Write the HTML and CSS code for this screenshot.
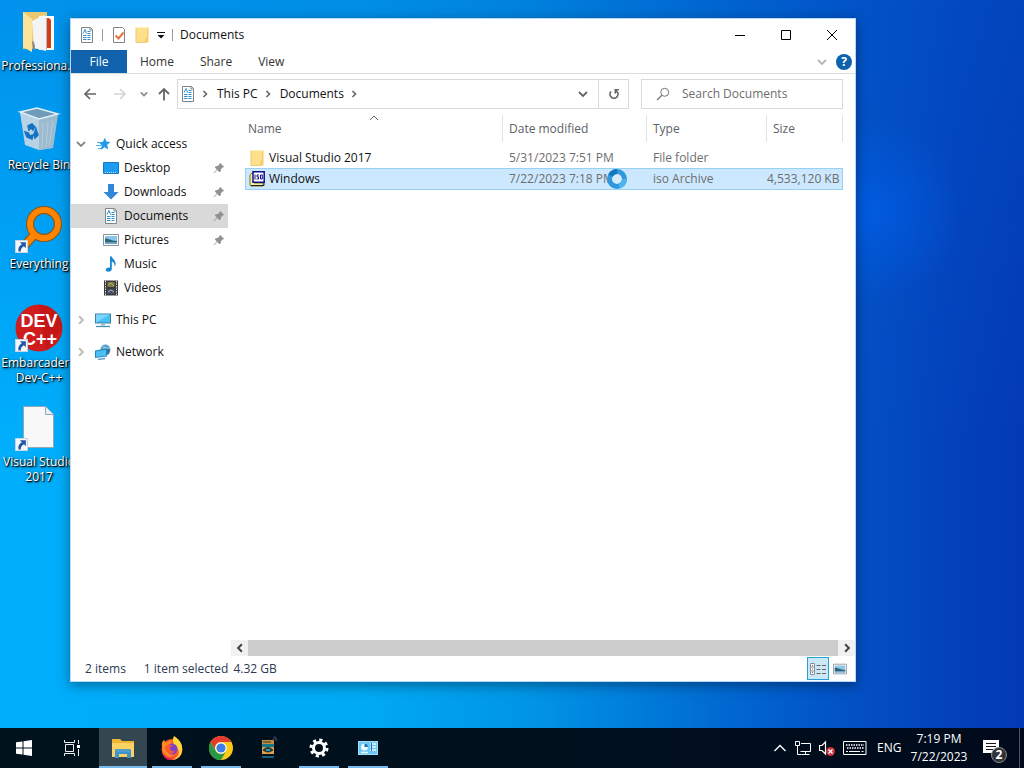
FILE: index.html
```html
<!DOCTYPE html>
<html lang="en">
<head>
<meta charset="utf-8">
<title>Documents</title>
<link rel="stylesheet" href="styles.css">
</head>
<body>
<svg class="sprite" aria-hidden="true">
  <symbol id="doc" viewBox="0 0 16 16">
    <path d="M2.5.5h9l2 2v13h-11z" fill="#fff" stroke="#7d868c"/>
    <path d="M11 .5V3h2.500" fill="none" stroke="#7d868c"/>
    <path d="M4 6.500 6 2.500l1.500 4M8.500 4.500h3M8.500 6.500h3M4 8.500h3.500M8.500 8.500h3M4 10.500h3.500M8.500 10.500h3M4 12.500h3.500M8.500 12.500h3" fill="none" stroke="#2f8fcb"/>
  </symbol>
  <symbol id="folder" viewBox="0 0 16 16">
    <path d="M2 .5h11v13l-1 2H2z" fill="#ffe08a"/>
    <path d="M11.500 11l1.500-1v-9.500h1.500v15H11z" fill="#f3cd66"/>
    <path d="M2 .5v15h10" fill="none" stroke="#edca70"/>
  </symbol>
  <symbol id="pin" viewBox="0 0 12 12">
    <path d="M7 .8 11.200 5l-1.600.5-1.600 1.700-.2 2.300-1.500.5-2.100-2.100L1 11.200l-.4-.5 3.200-3.200L1.900 5.600l.6-1.400 2.300-.2 1.600-1.600z" fill="#8d9296"/>
  </symbol>
  <symbol id="picture" viewBox="0 0 16 16">
    <path d="M.5 2.500h15v11H.5z" fill="#fff" stroke="#8c9499"/>
    <path d="M2 4h12v8H2z" fill="#8cc5ea"/>
    <path d="M2 6.500c3-.5 5 2 12 2.500v1.500H2z" fill="#2e6575"/>
    <path d="M2 10.500h12V12H2z" fill="#6fa3cb"/>
  </symbol>
  <symbol id="chev-r" viewBox="0 0 8 8"><path d="M2.500 1 5.500 4l-3 3" fill="none" stroke="currentColor" stroke-width="1.600"/></symbol>
  <symbol id="chev-d" viewBox="0 0 10 10"><path d="M1 3l4 4 4-4" fill="none" stroke="currentColor" stroke-width="1.800"/></symbol>
  <symbol id="shortcut" viewBox="0 0 12 12">
    <path d="M.5.5h11v11H.5z" fill="#f6f8fb" stroke="#c9d4e0"/>
    <path d="M4.500 2H10v5.500L8.200 5.800C6.200 7 5.400 8.200 5.300 10.500H3.200C2.600 7.500 4 5.300 6.300 4z" fill="#2456a6"/>
  </symbol>
</svg>

<main class="desktop">
  <ul class="shortcuts">
    <li><a href="#" class="shortcut">
      <svg class="art" viewBox="0 0 48 48">
        <path d="M8 4h24v36L8 41z" fill="#e9c870"/>
        <path d="M24 8h15v34H24z" fill="#fff"/>
        <path d="M27 11l7-1 2 2v28h-9z" fill="#d83b12"/>
        <path d="M17 13l12-6 2 3v33l-12-3z" fill="#f4f4f4"/>
        <path d="M31 10v33l1-2V11z" fill="#b9b9b9"/>
        <path d="M8 4l9 7v33L8 39z" fill="#fbe39b"/>
        <path d="M17 33q3 0 3 8l-2 1z" fill="#8a8a8a"/>
      </svg>
      <span>Professiona...</span></a></li>
    <li><a href="#" class="shortcut">
      <svg class="art" viewBox="0 0 48 48">
        <path d="M5 5l17-4 21 6-5 34-13 2-14-6z" fill="#a8c4d6"/>
        <path d="M5 5l19 7v31L10 38z" fill="#b6d2e4"/>
        <path d="M24 12l19-5-6 34-13 2z" fill="#9dbbcf"/>
        <path d="M5 5l17-4 21 6-19 5z" fill="#6e9cb8" stroke="#dfeef7" stroke-width="1.500"/>
        <path d="M13 19l4-2 3 3-2 3-2-2-2 2zM21 22l2 6-3 3-1-4zM17 32l-5-2-2-5 3 1 2 3 3-1z" fill="#1771c4" stroke="#1771c4" stroke-width="1.500"/>
        <path d="M28 16l-1 25M33 15l-2 25M38 14l-4 25" stroke="#b3cddd"/>
      </svg>
      <span>Recycle Bin</span></a></li>
    <li><a href="#" class="shortcut">
      <svg class="art" viewBox="0 0 48 48">
        <path d="M20 28 9 40" stroke="#8a5415" stroke-width="9"/>
        <circle cx="29" cy="18" r="14" fill="none" stroke="#8a5415" stroke-width="8"/>
        <circle cx="29" cy="18" r="14" fill="none" stroke="#ff8500" stroke-width="6"/>
        <path d="M20 28 9 40" stroke="#ff8500" stroke-width="7"/>
        <use href="#shortcut" x="0" y="34" width="13" height="13"/>
      </svg>
      <span>Everything</span></a></li>
    <li><a href="#" class="shortcut">
      <svg class="art" viewBox="0 0 48 48">
        <circle cx="24" cy="23" r="23.500" fill="#cf1c1c"/>
        <path d="M24 0a23 23 0 0 1 23 23L31 46z" fill="#b80f14" opacity=".45"/>
        <text x="24" y="22" class="dev">DEV</text>
        <text x="25" y="40" class="dev">C++</text>
        <use href="#shortcut" x="0" y="34" width="13" height="13"/>
      </svg>
      <span>Embarcadero Dev-C++</span></a></li>
    <li><a href="#" class="shortcut">
      <svg class="art" viewBox="0 0 48 48">
        <path d="M8.500 2.500h22l8 8v33h-30z" fill="#f8f8f8" stroke="#92a7b5"/>
        <path d="M30.500 2.500v8h8" fill="#e9eef2" stroke="#92a7b5"/>
        <use href="#shortcut" x="0" y="34" width="13" height="13"/>
      </svg>
      <span>Visual Studio 2017</span></a></li>
  </ul>

  <section class="window" aria-label="Documents">
    <header class="titlebar">
      <div class="quick">
        <svg class="i16"><use href="#doc"/></svg>
        <i class="bar"></i>
        <svg class="i16" viewBox="0 0 16 16"><path d="M2.500.5h9l2 2v13h-11z" fill="#fff" stroke="#858585"/><path d="M4.500 8.500l3 3 5-6" fill="none" stroke="#e2733f" stroke-width="2"/></svg>
        <svg class="i16"><use href="#folder"/></svg>
        <svg class="i8" viewBox="0 0 8 8"><path d="M0 1.500h8" stroke="#111"/><path d="M.5 4h7L4 7.500z" fill="#111"/></svg>
        <i class="bar"></i>
      </div>
      <h1>Documents</h1>
      <div class="controls">
        <button aria-label="Minimize"><svg viewBox="0 0 12 12"><path d="M1 6.500h10"/></svg></button>
        <button aria-label="Maximize"><svg viewBox="0 0 12 12"><path d="M1.500 1.500h9v9h-9z"/></svg></button>
        <button aria-label="Close"><svg viewBox="0 0 12 12"><path d="M1 1l10 10M11 1 1 11"/></svg></button>
      </div>
    </header>

    <nav class="ribbon">
      <button class="tab file">File</button>
      <button class="tab">Home</button>
      <button class="tab">Share</button>
      <button class="tab">View</button>
      <div class="ribbon-end">
        <button class="plain faint" aria-label="Expand the ribbon"><svg class="i10"><use href="#chev-d"/></svg></button>
        <button class="help" aria-label="Help">?</button>
      </div>
    </nav>

    <div class="navbar">
      <div class="arrows">
        <button class="plain" aria-label="Back"><svg class="i16" viewBox="0 0 16 16"><path d="M14 8H3M8 3 3 8l5 5" fill="none" stroke="#666" stroke-width="1.700"/></svg></button>
        <button class="plain" aria-label="Forward"><svg class="i16" viewBox="0 0 16 16"><path d="M2 8h11M8 3l5 5-5 5" fill="none" stroke="#d4d4d4" stroke-width="1.500"/></svg></button>
        <button class="plain recent" aria-label="Recent locations"><svg class="i8" viewBox="0 0 10 10"><path d="M1 3l4 4 4-4" fill="none" stroke="#888" stroke-width="2"/></svg></button>
        <button class="plain" aria-label="Up"><svg class="i16" viewBox="0 0 16 16"><path d="M8 14.500V3M3 8l5-5 5 5" fill="none" stroke="#666" stroke-width="1.800"/></svg></button>
      </div>
      <div class="address">
        <svg class="i16"><use href="#doc"/></svg>
        <svg class="i8"><use href="#chev-r"/></svg>
        <a href="#">This PC</a>
        <svg class="i8"><use href="#chev-r"/></svg>
        <a href="#">Documents</a>
        <svg class="i8"><use href="#chev-r"/></svg>
        <button class="plain drop" aria-label="Previous locations"><svg class="i10"><use href="#chev-d"/></svg></button>
        <button class="plain refresh" aria-label="Refresh"><svg class="i14" viewBox="0 0 14 14"><path d="M4 4.500A4 4 0 1 0 10 4.500" fill="none" stroke="#666" stroke-width="1.700"/><path d="M7.500 2h4.500v1.200H10.500L9 6.500H7.500z" fill="#666"/></svg></button>
      </div>
      <label class="search">
        <svg class="i14" viewBox="0 0 14 14"><circle cx="8.700" cy="5.300" r="4" fill="none" stroke="#777"/><path d="M6 8.200 1 13" stroke="#777" stroke-width="1.300"/></svg>
        <input type="text" placeholder="Search Documents" aria-label="Search Documents">
      </label>
    </div>

    <div class="body">
      <nav class="tree">
        <a href="#" class="root"><svg class="i10 arrow expanded"><use href="#chev-d"/></svg>
          <svg class="i16" viewBox="0 0 16 16"><path d="M10 1.500l1.300 4 4.200.5-3.300 2.700 1 4.800-3.700-2.300-3.900 2.800 1.200-4.500L4 6.500l4-.7z" fill="#239ae8"/><path d="M2 6.500h4M1 9.500h5M3 12.500h3" stroke="#4aa9e6"/></svg>Quick access</a>
        <a href="#"><svg class="i16" viewBox="0 0 16 16"><path d="M.5 2.500h15v11H.5z" fill="#1c9cf2" stroke="#1678be"/><path d="M2 12.500h12" stroke="#b9dff8" stroke-dasharray="1"/></svg>Desktop<svg class="pin"><use href="#pin"/></svg></a>
        <a href="#"><svg class="i16" viewBox="0 0 16 16"><path d="M5 0h6v8h4.500L8 15.500.5 8H5z" fill="#2f87d6"/></svg>Downloads<svg class="pin"><use href="#pin"/></svg></a>
        <a href="#" class="current"><svg class="i16"><use href="#doc"/></svg>Documents<svg class="pin"><use href="#pin"/></svg></a>
        <a href="#"><svg class="i16"><use href="#picture"/></svg>Pictures<svg class="pin"><use href="#pin"/></svg></a>
        <a href="#"><svg class="i16" viewBox="0 0 16 16"><path d="M7 .5h1.800c.4 2.500 4.700 4 3.700 8.500l-1 1c.2-3-1.200-4-2.700-4.500V13c0 1.500-1.500 2.700-3.300 2.700S2.500 14.800 2.800 13.500s2.200-2.300 4.200-1.800z" fill="#1787d4"/></svg>Music</a>
        <a href="#"><svg class="i16" viewBox="0 0 16 16"><path d="M1 .5h14v15H1z" fill="#3a3a3a"/><path d="M2.500 1v14M13.500 1v14" stroke="#ddd" stroke-dasharray="1.500 1"/><path d="M4.500 2h7v5h-7z" fill="#7a7c47"/><path d="M4.500 9h7v5h-7z" fill="#40507e"/><path d="M5 5l3-2 3 3M5 12l3-2 3 2" fill="none" stroke="#b9ae69"/></svg>Videos</a>
        <a href="#" class="root gap"><svg class="i10 arrow"><use href="#chev-r"/></svg>
          <svg class="i16" viewBox="0 0 16 16"><path d="M0 1.500h16v10H0z" fill="#3d7f9e"/><path d="M1 2.500h14v8H1z" fill="#45c0f5"/><path d="M1 10.500 15 2.500H1z" fill="#79d6fa"/><path d="M6 11.500h4v2H6z" fill="#9bb"/><path d="M1 14.500h14" stroke="#4592b4" stroke-width="1.300"/></svg>This PC</a>
        <a href="#" class="root gap"><svg class="i10 arrow"><use href="#chev-r"/></svg>
          <svg class="i16" viewBox="0 0 16 16"><circle cx="10.500" cy="5.500" r="5" fill="#5aa3cc"/><path d="M8 3q3 2 7 1" stroke="#a8d8ef" fill="none"/><path d="M14 4.500q1.500 2 0 5.500l-2 1V5z" fill="#3a6f96"/><path d="M0 6.500 12 4.500v8L0 14z" fill="#2686bd"/><path d="M1 7.500 11 5.800v5.900L1 12.900z" fill="#4cbef2"/><path d="M3 15.500l7-1" stroke="#5a9dbe" stroke-width="1.300"/></svg>Network</a>
      </nav>

      <div class="files">
        <div class="listing">
          <table>
            <colgroup><col><col class="c-date"><col class="c-type"><col class="c-size"></colgroup>
            <thead>
              <tr>
                <th scope="col"><div class="head">Name<svg class="sort" viewBox="0 0 10 6"><path d="M1 5l4-4 4 4" fill="none" stroke="#666"/></svg></div></th>
                <th scope="col"><div class="head">Date modified</div></th>
                <th scope="col"><div class="head">Type</div></th>
                <th scope="col"><div class="head">Size</div></th>
              </tr>
            </thead>
            <tbody>
              <tr>
                <td><div class="name"><svg class="i16"><use href="#folder"/></svg>Visual Studio 2017</div></td>
                <td>5/31/2023 7:51 PM</td><td>File folder</td><td></td>
              </tr>
              <tr class="selected">
                <td><div class="name"><svg class="i16" viewBox="0 0 16 16"><path d="M1 4l2-2h2v10h9v3H2l-1-1z" fill="#f7f3a0" stroke="#77771b"/><path d="M2 14.500h13V12" fill="none" stroke="#222"/><path d="M4 .8h11.200v10.400H4z" fill="#fff" stroke="#10108c" stroke-width="1.500"/><path d="M6 3.500v5M9.800 4H8v1.800h1.500V8H7.500M11.500 4h1.800v4h-1.800z" fill="none" stroke="#10108c"/></svg>Windows</div></td>
                <td>7/22/2023 7:18 PM</td><td>iso Archive</td><td class="size">4,533,120 KB</td>
              </tr>
            </tbody>
          </table>
        </div>
        <div class="scroll">
          <button class="plain" aria-label="Scroll left"><svg class="i10 flip"><use href="#chev-r"/></svg></button>
          <div class="thumb"></div>
          <button class="plain" aria-label="Scroll right"><svg class="i10"><use href="#chev-r"/></svg></button>
        </div>
      </div>
    </div>

    <footer class="status">
      <span class="count">2 items</span><span>1 item selected</span><span class="total">4.32 GB</span>
      <div class="views">
        <button class="view on" aria-label="Details"><svg class="i16" viewBox="0 0 16 16"><path d="M.5 2.500h4v11h-4zM.5 6h4M.5 10h4" fill="#fff" stroke="#8b8f92"/><path d="M2 4.500h1M2 8h1M2 11.500h1" stroke="#2d73a5"/><path d="M6.500 4.500h4M12 4.500h4M6.500 8.500h4M12 8.500h4M6.500 12.500h4M12 12.500h4" stroke="#666"/></svg></button>
        <button class="view" aria-label="Large icons"><svg class="i14" viewBox="0 0 16 16"><use href="#picture"/></svg></button>
      </div>
    </footer>
  </section>

  <svg class="busy" viewBox="0 0 20 20"><circle cx="10" cy="10" r="7.500" fill="#d4ecfb" stroke="#2f97dd" stroke-width="5"/><path d="M3.500 6.500A7.500 7.500 0 0 1 10 2.500" fill="none" stroke="#1676bd" stroke-width="5"/><path d="M17.500 10A7.500 7.500 0 0 1 12 17" fill="none" stroke="#4db5ee" stroke-width="5"/></svg>
</main>

<footer class="taskbar">
  <button class="task" aria-label="Start"><svg class="i16" viewBox="0 0 16 16"><path d="M0 2.300 6.500 1.400v6.100H0zM7.500 1.200 16 0v7.500H7.500zM0 8.500h6.500v6.100L0 13.700zM7.500 8.500H16V16l-8.500-1.200z" fill="#fff"/></svg></button>
  <button class="task" aria-label="Task View"><svg class="i16" viewBox="0 0 16 16"><path d="M.5 0v2.500h10V0M.5 16v-2.500h10V16M1.500 4.500h8v7h-8zM14.500 0v4M14.500 9v7" fill="none" stroke="#eee"/><path d="M13 5h3v3h-3z" fill="#fff"/></svg></button>
  <div class="apps">
    <button class="task running active" aria-label="File Explorer"><svg class="i24" viewBox="0 0 24 24"><path d="M1 3h8l2 2h12v16H1z" fill="#eeb530"/><path d="M1 7h22v14H1z" fill="#fcd362"/><path d="M5 13h14l1 1v8h-4v-4H8v4H4v-8z" fill="#3b93cf"/><path d="M5 13h14v3H5z" fill="#4f9dca"/></svg></button>
    <button class="task running" aria-label="Firefox"><svg class="i24" viewBox="0 0 24 24"><circle cx="12" cy="13.500" r="10.500" fill="#ff5a2e"/><path d="M2 11Q1 6 4 4q1 2 3 3 2-3 5-3-2 3-1 4l4 1 2 4-6 8Q3 20 2 11z" fill="#ff8b20"/><path d="M14 0c6 4 9 8 8 15-1 6-6 9-10 9 8-3 8-9 5-12-4-3-5-8-3-12z" fill="#ffd83c"/><circle cx="12" cy="13" r="5.500" fill="#8041c5"/><path d="M5 10q4-3 8 0-4 0-3 3 1 3 5 2-3 5-8 1Q4 13 5 10z" fill="#fb5b2b"/><path d="M3 17q4 7 12 5-6 4-10 0z" fill="#ed1c5c"/></svg></button>
    <button class="task running" aria-label="Chrome"><svg class="i24" viewBox="0 0 24 24"><circle cx="12" cy="12" r="12" fill="#fbc916"/><path d="M1.600 6A12 12 0 0 1 22.400 6H12a6 6 0 0 0-5.200 9z" fill="#e33b2e"/><path d="M1.600 6A12 12 0 0 0 12 24l5.200-9A6 6 0 0 1 6.800 15z" fill="#279847"/><circle cx="12" cy="12" r="5.800" fill="#fff"/><circle cx="12" cy="12" r="4.600" fill="#3d7eea"/></svg></button>
    <button class="task" aria-label="Utility"><svg class="i24" viewBox="0 0 24 24"><path d="M4 4h12v4H4z" fill="#c78d38"/><path d="M4 8h12v3H4z" fill="#167a87"/><path d="M4 11h12v7H4z" fill="#e0a04a"/><path d="M5 14q5-5 10 0-5 4-10 0zM5 6h8" fill="#17393e" stroke="#17393e"/><path d="M8 14h4" stroke="#49b6c0" stroke-width="1.500"/><path d="M4 20h12v2H4z" fill="#176078"/><path d="M15 4l2-3 2 4" fill="none" stroke="#26334b" stroke-width="2"/></svg></button>
    <button class="task running" aria-label="Settings"><svg class="i20" viewBox="0 0 20 20"><circle cx="10" cy="10" r="8" fill="none" stroke="#fff" stroke-width="3" stroke-dasharray="3.140 3.140"/><circle cx="10" cy="10" r="5.500" fill="none" stroke="#fff" stroke-width="3"/></svg></button>
    <button class="task running" aria-label="Control Panel"><svg class="i20" viewBox="0 0 20 20"><path d="M0 3h20v14H0z" fill="#9bdcf8"/><path d="M1 4h18v12H1z" fill="#6cc8f3"/><circle cx="6.500" cy="9" r="3.500" fill="#eef8fd"/><path d="M6.500 9V5.500A3.500 3.500 0 0 1 10 9z" fill="#1874c3"/><path d="M12 6h1M14 6h4M12 9h1M14 9h4M12 12h1M14 12h4M3 14.500h7" stroke="#e9f8ff" stroke-width="1.500"/><path d="M13.500 5v8" stroke="#1874c3"/></svg></button>
  </div>
  <div class="tray">
    <button class="plain" aria-label="Show hidden icons"><svg class="i14" viewBox="0 0 14 14"><path d="M1.500 10 7 4.500l5.500 5.500" fill="none" stroke="#fff" stroke-width="1.400"/></svg></button>
    <svg class="i16" viewBox="0 0 16 16"><path d="M6 3.500h9.500v8H5.500M10.500 11.500v3M6.500 14.500h8M.5 1.500h4v4h-4zM2.500 5.500v9h4" fill="none" stroke="#fff"/></svg>
    <svg class="i16" viewBox="0 0 16 16"><path d="M.5 5.500H3L6.500 2v12L3 10.500H.5z" fill="none" stroke="#fff" stroke-width="1.200"/><circle cx="11.500" cy="11.500" r="4.500" fill="#c8323b"/><path d="M9.500 9.500l4 4M13.500 9.500l-4 4" stroke="#fff" stroke-width="1.300"/></svg>
    <svg class="kbd" viewBox="0 0 24 14"><path d="M.5.5h22.500v13H.5z" fill="none" stroke="#fff"/><path d="M3 4h18M4 7h17" stroke="#fff" stroke-dasharray="1.500 1" stroke-width="1.300"/><path d="M3 10.500h2M6 10.500h11M18.500 10.500h2" stroke="#fff" stroke-width="1.200"/></svg>
    <span class="lang">ENG</span>
    <time class="clock">7:19 PM<br>7/22/2023</time>
    <button class="plain notes" aria-label="Notifications"><svg class="i16" viewBox="0 0 16 16"><path d="M0 0h16v13h-5v3l-3-3H0z" fill="#fff"/><path d="M3 3.500h10M3 6.500h10M3 9.500h7" stroke="#111c22"/></svg><b>2</b></button>
    <i class="peek"></i>
  </div>
</footer>
</body>
</html>
```
FILE: styles.css
```css
* { box-sizing: border-box; }
html, body { height: 100%; }
body {
  margin: 0;
  display: flex;
  flex-direction: column;
  overflow: hidden;
  font: 12px/16px "Open Sans", "Noto Sans", sans-serif;
  color: #111;
}
button { font: inherit; color: inherit; border: 0; padding: 0; background: none; display: flex; align-items: center; justify-content: center; }
a { color: inherit; text-decoration: none; }
svg { flex: none; display: block; }
.sprite { position: absolute; width: 0; height: 0; }
.i8 { width: 8px; height: 8px; }
.i10 { width: 10px; height: 10px; }
.i14 { width: 14px; height: 14px; }
.i16 { width: 16px; height: 16px; }
.i20 { width: 20px; height: 20px; }
.i24 { width: 24px; height: 24px; }

/* Desktop */
.desktop {
  flex: 1;
  min-height: 0;
  position: relative;
  background:
    radial-gradient(circle at 85% 29%, rgba(0, 98, 240, .6), rgba(0, 90, 230, 0) 9%),
    linear-gradient(to bottom, rgba(0, 90, 205, .34), rgba(0, 90, 205, 0) 60%),
    linear-gradient(to right, #00aefc 0, #00aaf4 35%, #0094e6 52%, #0066d0 72%, #034fc4 84%, #0340ba 94%, #033ab4 100%);
}
.shortcuts { list-style: none; margin: 0; padding: 8px 0 0; width: 78px; }
.shortcuts li { height: 99px; }
.shortcut { display: flex; flex-direction: column; align-items: center; color: #fff; text-align: center; font-size: 12px; line-height: 15px; text-shadow: 1px 1px 1px #000, 1px 1px 3px #000; }
.art { width: 48px; height: 48px; margin-bottom: 2px; overflow: visible; }
.dev { font: bold 18px/18px "Liberation Sans", sans-serif; fill: #fff; text-anchor: middle; text-shadow: none; }

/* Window */
.window {
  position: absolute;
  left: 70px;
  top: 18px;
  right: 168px;
  bottom: 46px;
  display: flex;
  flex-direction: column;
  background: #fff;
  border: 1px solid #b4daf4;
  box-shadow: 0 3px 12px rgba(0, 0, 0, .4);
}
.titlebar { display: flex; align-items: center; height: 31px; padding-left: 8px; }
.quick { display: flex; align-items: center; gap: 7px; }
.quick .bar { width: 1px; height: 12px; background: #999; }
.quick .bar:nth-child(2) { margin-right: 1px; }
h1 { font: inherit; margin: 0 0 0 7px; }
.controls { display: flex; margin-left: auto; align-self: stretch; }
.controls button { width: 46px; }
.controls svg { width: 12px; height: 12px; fill: none; stroke: #000; }

.ribbon { display: flex; height: 24px; border-bottom: 1px solid #dcdddf; }
.tab { padding: 0 13px; color: #333; }
.tab.file { width: 56px; background: #1062ad; color: #fff; }
.ribbon-end { display: flex; align-items: center; gap: 9px; margin-left: auto; padding-right: 3px; }
.faint { color: #b5b5b5; }
.help { width: 16px; height: 16px; border-radius: 50%; background: #0c62ac; color: #fff; font-weight: bold; }

.navbar { display: flex; align-items: stretch; height: 40px; padding: 5px 12px 5px 0; }
.arrows { display: flex; align-items: center; width: 106px; padding-left: 11px; gap: 14px; }
.arrows .recent { margin: 0 -6px 0 -2px; }
.address { flex: 1; display: flex; align-items: center; border: 1px solid #d9d9d9; padding-left: 2px; color: #666; }
.address > svg.i16 { margin-right: 5px; }
.address > svg.i8 { margin-right: 8px; }
.address a { color: #111; margin-right: 6px; }
.address .drop { margin-left: auto; width: 30px; }
.address .refresh { width: 30px; align-self: stretch; border-left: 1px solid #d9d9d9; }
.search { display: flex; align-items: center; width: 202px; margin-left: 12px; padding-left: 14px; gap: 12px; border: 1px solid #d9d9d9; }
.search input { flex: 1; min-width: 0; border: 0; outline: 0; padding: 0; font: inherit; background: none; }
.search input::placeholder { color: #6d6d6d; opacity: 1; }

.body { flex: 1; min-height: 0; display: flex; }
.tree { width: 157px; padding-top: 18px; margin-right: 3px; }
.tree a { display: flex; align-items: center; height: 24px; padding: 0 3px 0 32px; gap: 5px; }
.tree .root { padding-left: 5px; }
.tree .gap { margin-top: 8px; }
.tree .arrow { color: #bdbdbd; margin-right: 4px; }
.tree .expanded { color: #888; }
.tree .current { background: #d9d9d9; }
.pin { width: 12px; height: 12px; margin-left: auto; }

.files { flex: 1; min-width: 0; display: flex; flex-direction: column; }
.listing { flex: 1; padding: 1px 12px 0 14px; }
table { width: 100%; table-layout: fixed; border-collapse: separate; border-spacing: 0; }
.c-date { width: 144px; }
.c-type { width: 120px; }
.c-size { width: 76px; }
th { padding: 0 0 5px; font-weight: normal; text-align: left; color: #5b6169; }
.head { position: relative; height: 27px; padding-left: 6px; line-height: 27px; border-right: 1px solid #e2e2e2; }
th:first-child .head { padding-left: 3px; }
.sort { position: absolute; left: calc(50% - 5px); top: 0; width: 10px; height: 6px; }
td { height: 21px; padding: 0 0 0 6px; color: #6d6d6d; white-space: nowrap; }
td:first-child { padding-left: 4px; color: #111; }
.name { display: flex; align-items: center; gap: 4px; }
.selected td { height: 22px; background: #cce8ff; border: solid #99d1f5; border-width: 1px 0; }
.selected td:first-child { border-left-width: 1px; padding-left: 3px; }
.selected td:last-child { border-right-width: 1px; }
td.size { text-align: right; padding: 0 3px 0 0; }
.scroll { display: flex; height: 16px; background: #f1f1f1; color: #444; }
.scroll button { width: 17px; }
.scroll .thumb { flex: 1; background: #cdcdcd; }
.flip { transform: scaleX(-1); }

.status { display: flex; align-items: center; height: 25px; padding: 0 4px 0 14px; color: #2b3b52; }
.count { margin-right: 18px; }
.total { margin-left: 5px; }
.views { display: flex; align-items: center; margin-left: auto; }
.view { width: 22px; height: 23px; }
.view.on { background: #cbe8f6; border: 1px solid #26a0da; }

.busy { position: absolute; left: 607px; top: 169px; width: 20px; height: 20px; }

/* Taskbar */
.taskbar { flex: none; display: flex; height: 40px; background: linear-gradient(to right, #00121c, #000f1d 60%, #000a1c); color: #fff; }
.task { width: 48px; height: 40px; }
.apps { display: flex; gap: 1px; margin-left: 3px; }
.running { background: linear-gradient(#76b9ed, #76b9ed) center bottom / 40px 2px no-repeat; }
.running.active { background-color: #34464f; background-size: 100% 2px; }
.tray { display: flex; align-items: center; margin-left: auto; }
.tray > svg, .tray > button { margin-right: 8px; }
.kbd { width: 24px; height: 14px; }
.tray > .kbd { margin-right: 10px; }
.lang { width: 26px; }
.clock { width: 72px; text-align: center; line-height: 18px; }
.tray > .notes { position: relative; width: 32px; height: 40px; margin: 0 12px 0 0; }
.notes b { position: absolute; right: 0; bottom: 5px; width: 16px; height: 16px; border: 1px solid #888; border-radius: 50%; background: #30343a; line-height: 14px; }
.peek { align-self: stretch; width: 5px; border-left: 1px solid #4c555d; }
```
